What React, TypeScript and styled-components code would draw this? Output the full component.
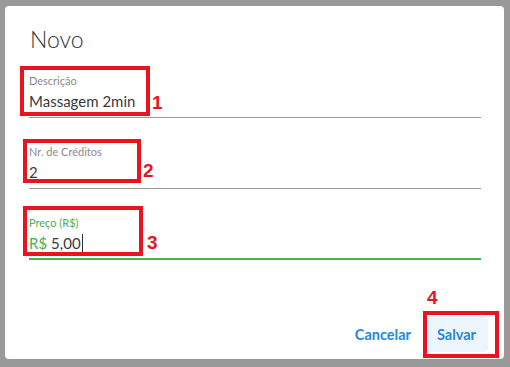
import React from 'react';
import styled, { createGlobalStyle } from 'styled-components';

const GlobalStyle = createGlobalStyle`
  html, body {
    margin: 0;
    padding: 0;
    background: #999999;
    font-family: 'Lato', 'Noto Sans', sans-serif;
  }
`;

const Backdrop = styled.div`
  width: 510px;
  height: 367px;
  padding: 6px 6px 8px 5px;
  box-sizing: border-box;
  overflow: hidden;
`;

const Dialog = styled.div`
  width: 499px;
  height: 353px;
  background: #ffffff;
  border-radius: 4px;
  display: flex;
  flex-direction: column;
  box-sizing: border-box;
`;

const Title = styled.h2`
  margin: 0;
  padding: 18px 24px 0 25px;
  font-size: 23px;
  line-height: 30px;
  font-weight: 300;
  color: #333333;
`;

const Content = styled.div`
  display: flex;
  flex-direction: column;
  gap: 27px;
  padding: 20px 23px 0 24px;
  flex: 1;
`;

const Field = styled.div`
  position: relative;
  display: flex;
  flex-direction: column;
`;

const Label = styled.label<{ $focused?: boolean }>`
  font-size: 11px;
  line-height: 14px;
  color: ${({ $focused }) => ($focused ? '#4caf50' : '#8a8a8a')};
`;

const InputRow = styled.div<{ $focused?: boolean }>`
  display: flex;
  align-items: center;
  gap: 4px;
  height: 20px;
  margin-top: 3px;
  padding-bottom: ${({ $focused }) => ($focused ? '5px' : '6px')};
  border-bottom: ${({ $focused }) => ($focused ? '2px solid #4caf50' : '1px solid #9a9a9a')};
`;

const Adornment = styled.span`
  font-size: 15px;
  color: #4caf50;
`;

const Value = styled.span<{ $caret?: boolean }>`
  font-size: 15px;
  color: #3a3a3a;
  border-right: ${({ $caret }) => ($caret ? '1px solid #333' : 'none')};
  padding-right: 1px;
`;

const Marker = styled.div<{ $w: number; $h: number; $top: number; $left: number }>`
  position: absolute;
  top: ${({ $top }) => $top}px;
  left: ${({ $left }) => $left}px;
  width: ${({ $w }) => $w}px;
  height: ${({ $h }) => $h}px;
  border: 4px solid #e8141f;
  box-sizing: border-box;
  pointer-events: none;
`;

const MarkerNumber = styled.span<{ $top: number; $left: number }>`
  position: absolute;
  top: ${({ $top }) => $top}px;
  left: ${({ $left }) => $left}px;
  font-family: 'Liberation Sans', Arial, sans-serif;
  font-size: 19px;
  font-weight: 700;
  line-height: 20px;
  color: #e8141f;
`;

const Actions = styled.div`
  position: relative;
  display: flex;
  justify-content: flex-end;
  align-items: center;
  gap: 2px;
  padding: 0 16px 7px 0;
`;

const Button = styled.button<{ $active?: boolean }>`
  border: none;
  border-radius: 4px;
  background: ${({ $active }) => ($active ? '#ecf5fe' : 'transparent')};
  color: #2189e3;
  font-family: 'Lato', 'Noto Sans', sans-serif;
  font-size: 14.5px;
  font-weight: 700;
  height: 36px;
  padding: 0 12px;
  cursor: pointer;
`;

const App = () => {
  return (
    <>
      <GlobalStyle />
      <Backdrop>
        <Dialog>
          <Title>Novo</Title>
          <Content>
            <Field>
              <Label>Descrição</Label>
              <InputRow>
                <Value>Massagem 2min</Value>
              </InputRow>
              <Marker $top={-8} $left={-9} $w={130} $h={50} />
              <MarkerNumber $top={19} $left={123}>1</MarkerNumber>
            </Field>
            <Field>
              <Label>Nr. de Créditos</Label>
              <InputRow>
                <Value>2</Value>
              </InputRow>
              <Marker $top={-6} $left={-6} $w={118} $h={44} />
              <MarkerNumber $top={16} $left={114}>2</MarkerNumber>
            </Field>
            <Field>
              <Label $focused>Preço (R$)</Label>
              <InputRow $focused>
                <Adornment>R$</Adornment>
                <Value $caret>5,00</Value>
              </InputRow>
              <Marker $top={-10} $left={-6} $w={120} $h={50} />
              <MarkerNumber $top={17} $left={118}>3</MarkerNumber>
            </Field>
          </Content>
          <Actions>
            <Button>Cancelar</Button>
            <Button $active>Salvar</Button>
            <Marker $top={-5} $left={418} $w={76} $h={47} />
            <MarkerNumber $top={-28} $left={422}>4</MarkerNumber>
          </Actions>
        </Dialog>
      </Backdrop>
    </>
  );
};

export default App;
